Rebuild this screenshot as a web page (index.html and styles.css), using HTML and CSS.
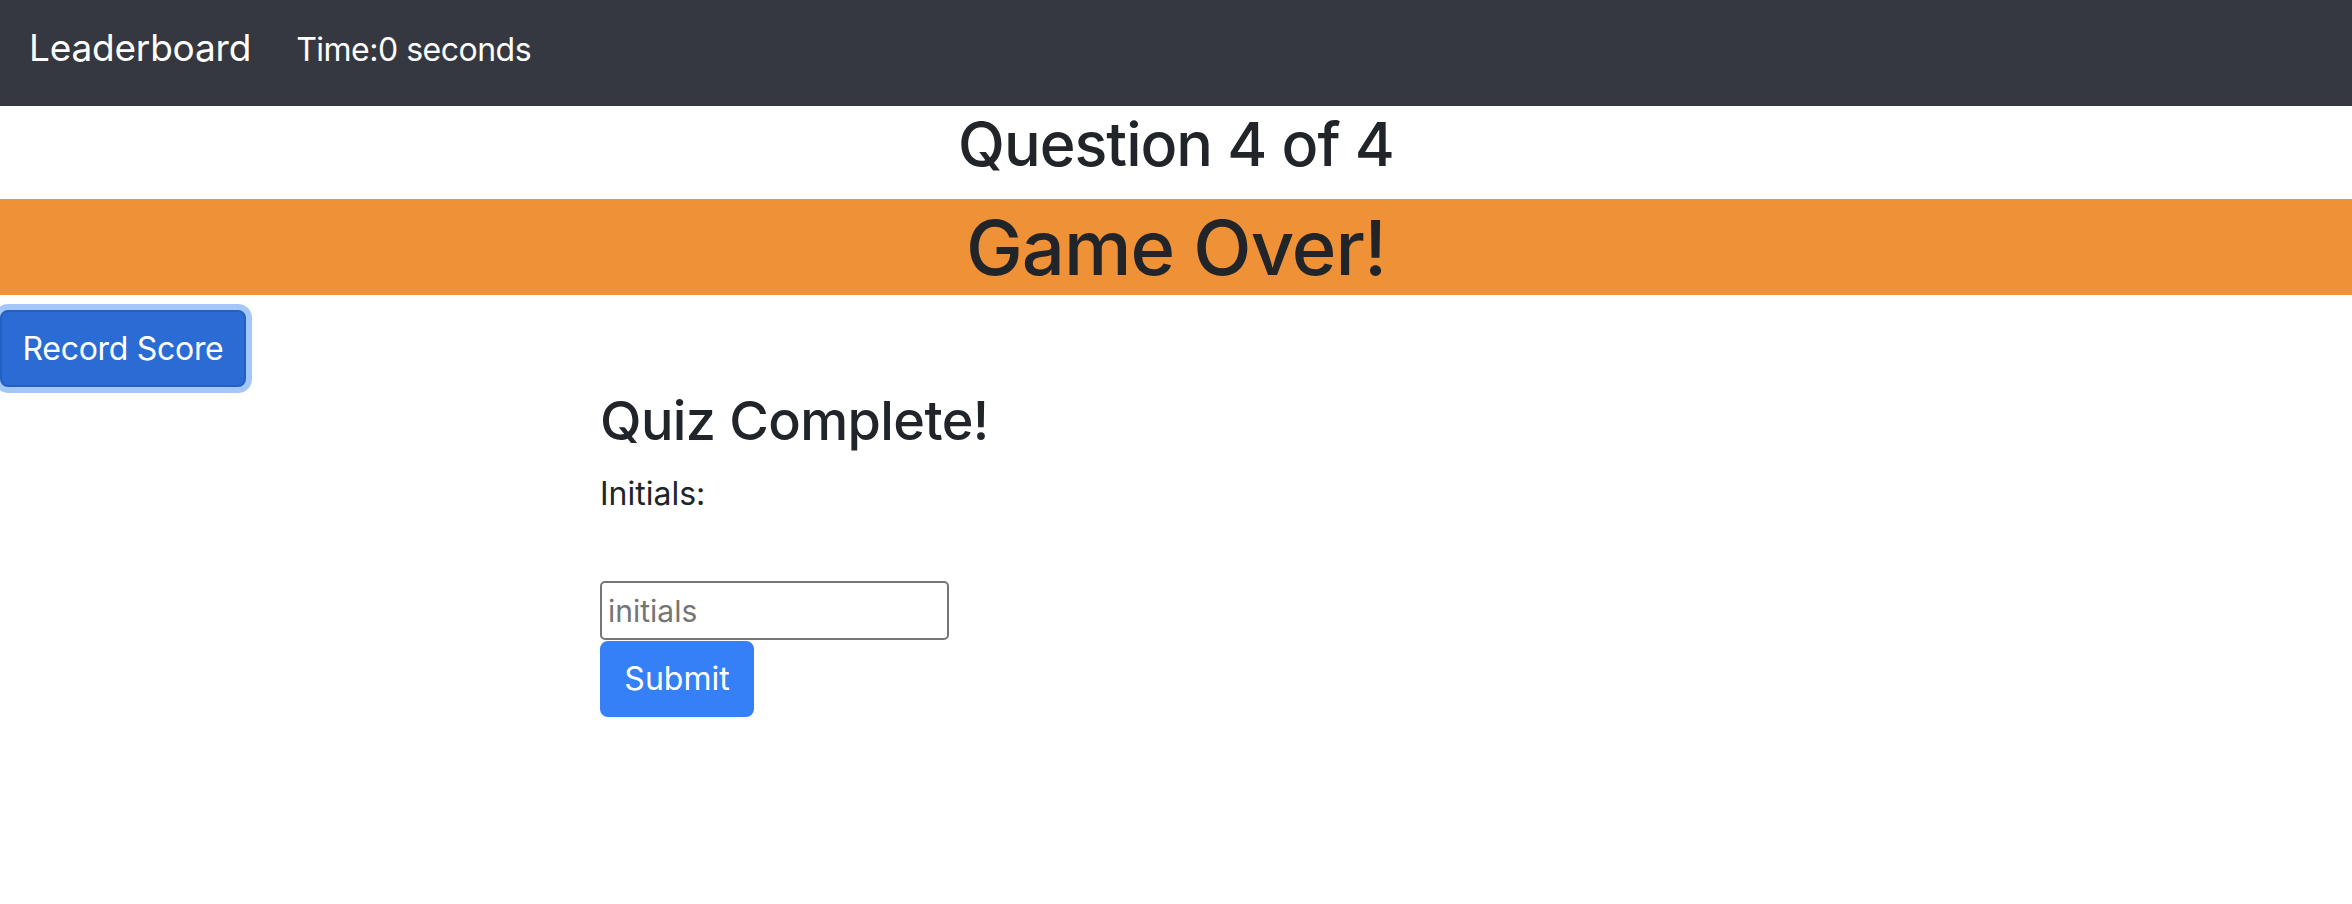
FILE: index.html
```html
<!DOCTYPE html>
<html lang="en">
<head>
<meta charset="utf-8">
<title>Quiz</title>
<link rel="stylesheet" href="styles.css">
</head>
<body>
<nav class="navbar">
  <a class="brand" href="#">Leaderboard</a>
  <span class="timer">Time:0 seconds</span>
</nav>
<h2 class="question">Question 4 of 4</h2>
<h1 class="banner">Game Over!</h1>
<div class="record-row">
  <button class="btn btn-record" type="button">Record Score</button>
</div>
<div class="results">
  <h3 class="results-title">Quiz Complete!</h3>
  <label class="initials-label" for="initials">Initials:</label>
  <input class="initials-input" id="initials" type="text" placeholder="initials">
  <button class="btn btn-submit" type="button">Submit</button>
</div>
</body>
</html>
```
FILE: styles.css
```css
* { box-sizing: border-box; }
html, body { margin: 0; padding: 0; }
body {
  font-family: Inter, "Noto Sans", "Liberation Sans", sans-serif;
  color: #212529;
  background: #ffffff;
  font-size: 32px;
  line-height: 1.5;
}
.navbar {
  display: flex;
  align-items: baseline;
  height: 106px;
  padding: 18px 32px 0 29px;
  background: #353840;
}
.brand {
  color: #ffffff;
  text-decoration: none;
  font-size: 37px;
  letter-spacing: -0.2px;
  line-height: 60px;
  margin-right: 45px;
}
.timer {
  color: #ffffff;
  font-size: 32px;
  letter-spacing: -0.5px;
  line-height: 60px;
}
.question {
  margin: 0 0 16px 0;
  text-align: center;
  font-size: 61px;
  letter-spacing: -1px;
  font-weight: 500;
  line-height: 77px;
}
.banner {
  margin: 0;
  background: #ef9136;
  text-align: center;
  font-size: 76px;
  letter-spacing: -1px;
  font-weight: 500;
  line-height: 96px;
  height: 96px;
}
.record-row {
  display: flex;
  padding-top: 15px;
}
.btn {
  display: inline-block;
  font-family: inherit;
  font-size: 32px;
  line-height: 48px;
  padding: 12px 24px;
  border: 2px solid transparent;
  border-radius: 8px;
  color: #ffffff;
  cursor: pointer;
  white-space: nowrap;
  text-align: center;
}
.btn-record {
  background: #2b6bd4;
  border-color: #2460c2;
  box-shadow: 0 0 0 6px #a4c7f9;
  height: 77px;
  width: 246px;
  padding: 12px 0;
  letter-spacing: -0.3px;
}
.results {
  display: flex;
  flex-direction: column;
  align-items: flex-start;
  padding-left: 600px;
}
.results-title {
  margin: 0 0 16px 0;
  font-size: 54px;
  letter-spacing: -0.6px;
  font-weight: 500;
  line-height: 67px;
}
.initials-label {
  display: block;
  font-size: 32px;
  line-height: 48px;
  margin-bottom: 63px;
}
.initials-input {
  width: 349px;
  height: 59px;
  font-family: inherit;
  font-size: 30px;
  padding: 0 6px;
  border: 2px solid #767676;
  border-radius: 5px;
  color: #212529;
  margin: 0 0 1px 0;
}
.initials-input::placeholder {
  color: #757575;
}
.btn-submit {
  background: #3580f7;
  border-color: #3580f7;
  width: 154px;
  height: 76px;
  padding: 12px 0;
}
```
